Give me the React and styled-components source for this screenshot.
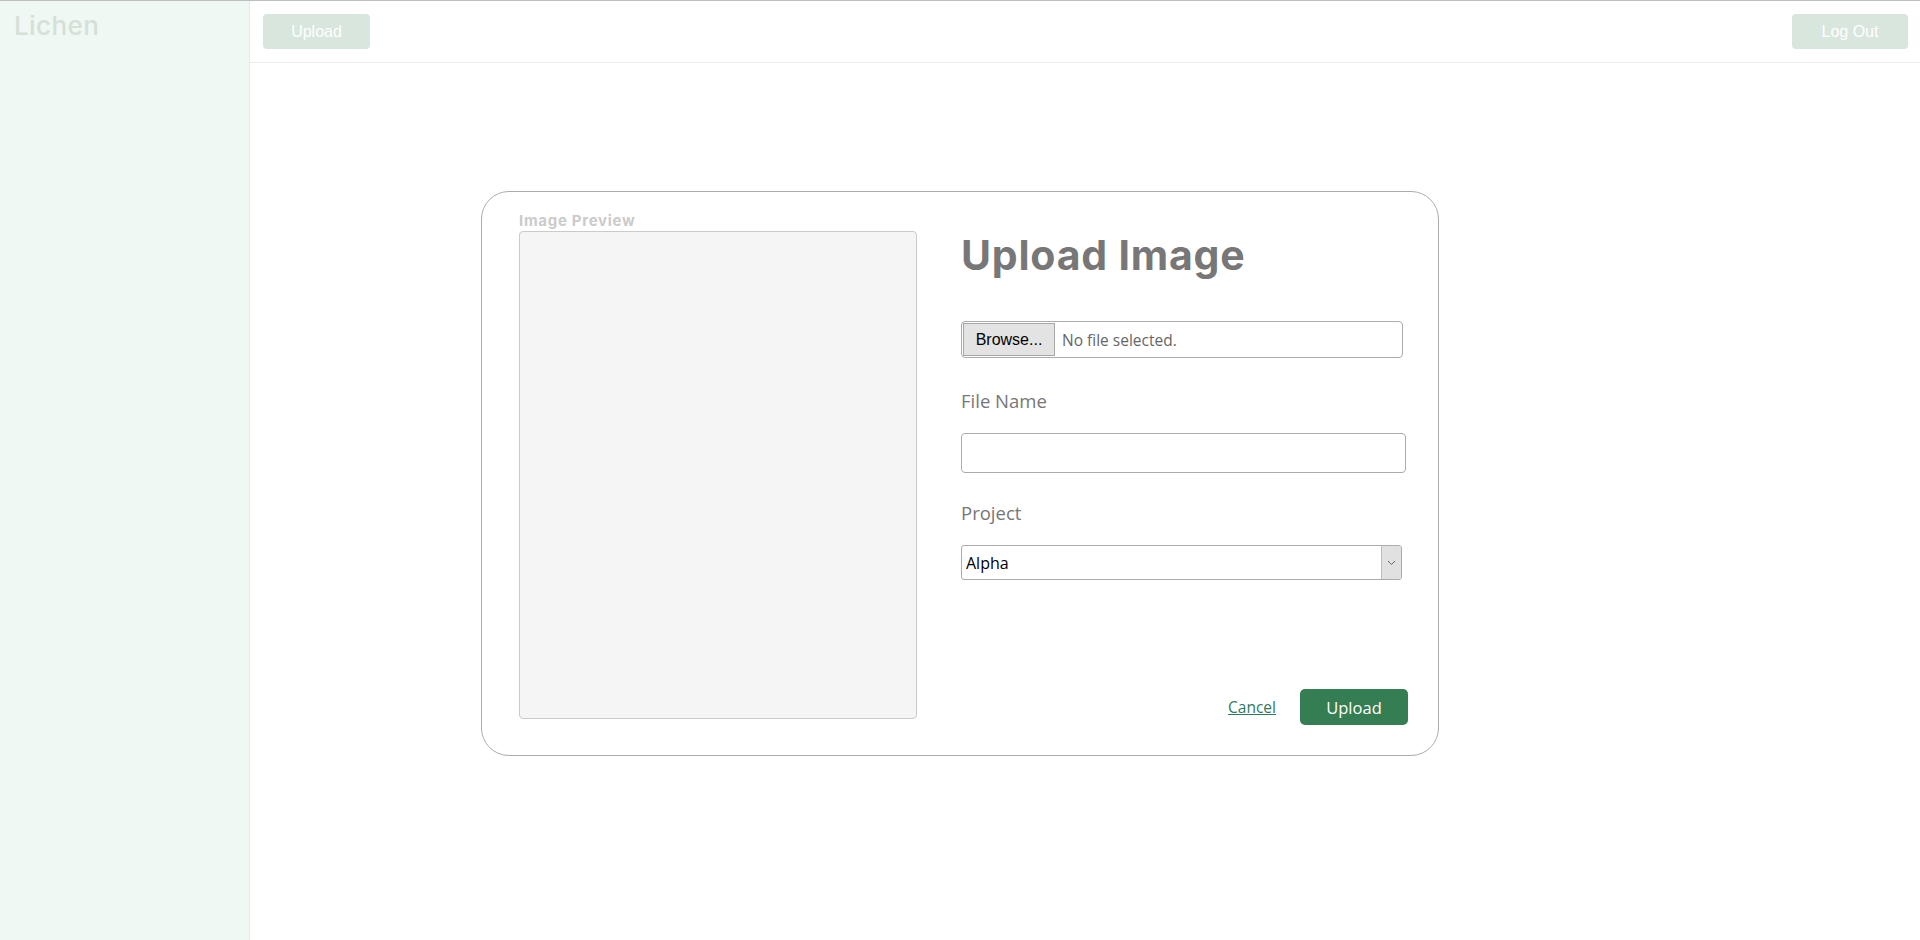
import React from "react";
import styled, { createGlobalStyle } from "styled-components";

const Global = createGlobalStyle`
  html, body { margin: 0; padding: 0; height: 100%; }
  body { background: #fff; font-family: "Open Sans", "Noto Sans", sans-serif; }
  * { box-sizing: border-box; }
`;

const Shell = styled.div`
  display: flex;
  height: 100vh;
  border-top: 1px solid #bdbdbd;
`;

const Sidebar = styled.aside`
  width: 250px;
  flex: none;
  background: #eff8f3;
  border-right: 1px solid #e3ebe6;
  padding: 8px 14px;
`;

const Logo = styled.div`
  font-family: Inter, sans-serif;
  font-weight: 500;
  font-size: 26px;
  line-height: 34px;
  color: #d5e0d9;
  letter-spacing: 0.4px;
`;

const Main = styled.main`
  flex: 1;
  display: flex;
  flex-direction: column;
`;

const Header = styled.header`
  height: 62px;
  display: flex;
  align-items: center;
  justify-content: space-between;
  padding: 0 12px 0 13px;
  border-bottom: 1px solid #ececec;
`;

const GhostButton = styled.button`
  height: 35px;
  width: ${(p) => p.$w}px;
  border: none;
  border-radius: 4px;
  background: #d8e6dd;
  color: #fff;
  font-family: "Liberation Sans", Arial, sans-serif;
  font-size: 16px;
  cursor: pointer;
`;

const Overlay = styled.div`
  position: fixed;
  inset: 0;
  display: flex;
  align-items: center;
  justify-content: center;
  pointer-events: none;
`;

const Modal = styled.section`
  pointer-events: auto;
  width: 958px;
  height: 565px;
  margin-top: 7px;
  background: #fff;
  border: 1px solid #ababab;
  border-radius: 28px;
  padding: 19px 30px 0 37px;
  display: flex;
  gap: 44px;
`;

const PreviewCol = styled.div`
  width: 398px;
  flex: none;
`;

const PreviewLabel = styled.div`
  font-family: Inter, sans-serif;
  font-weight: 700;
  font-size: 15px;
  line-height: 20px;
  letter-spacing: 0.7px;
  color: #cbcbcb;
`;

const PreviewBox = styled.div`
  height: 488px;
  background: #f5f5f5;
  border: 1px solid #cacaca;
  border-radius: 4px;
`;

const FormCol = styled.div`
  flex: 1;
  display: flex;
  flex-direction: column;
  padding-top: 19px;
`;

const Title = styled.h1`
  margin: 0;
  font-family: Inter, sans-serif;
  font-weight: 700;
  font-size: 41px;
  line-height: 50px;
  letter-spacing: 0.8px;
  color: #777;
`;

const FileBox = styled.div`
  margin-top: 41px;
  width: 442px;
  height: 37px;
  border: 1px solid #ababab;
  border-radius: 4px;
  display: flex;
  align-items: center;
  padding: 1px;
  gap: 7px;
`;

const BrowseButton = styled.button`
  width: 92px;
  height: 33px;
  border: 1px solid #a8a8a8;
  background: #e3e3e3;
  color: #000;
  font-family: "Liberation Sans", Arial, sans-serif;
  font-size: 16px;
  padding: 0;
`;

const FileStatus = styled.span`
  font-size: 15.5px;
  color: #666;
`;

const FieldLabel = styled.label`
  margin-top: ${(p) => p.$mt}px;
  font-size: 18.5px;
  line-height: 26px;
  color: #777;
`;

const TextInput = styled.input`
  margin-top: 19px;
  width: 445px;
  height: 40px;
  border: 1px solid #ababab;
  border-radius: 4px;
  padding: 0 8px;
  font-size: 16px;
  outline: none;
`;

const SelectWrap = styled.div`
  position: relative;
  margin-top: 19px;
  width: 441px;
  height: 35px;
`;

const Select = styled.select`
  appearance: none;
  width: 100%;
  height: 100%;
  border: 1px solid #ababab;
  border-radius: 3px;
  background: #fff;
  padding: 0 4px;
  font-family: "Open Sans", sans-serif;
  font-size: 16px;
  color: #000;
  outline: none;
`;

const Chevron = styled.span`
  position: absolute;
  top: 1px;
  right: 1px;
  bottom: 1px;
  width: 20px;
  background: #e1e1e1;
  border-left: 1px solid #bdbdbd;
  border-radius: 0 2px 2px 0;
  display: flex;
  align-items: center;
  justify-content: center;
  pointer-events: none;
`;

const Actions = styled.div`
  margin-top: 109px;
  display: flex;
  justify-content: flex-end;
  align-items: center;
  gap: 24px;
`;

const CancelLink = styled.a`
  font-size: 15.5px;
  color: #2f7a5c;
  text-decoration: underline;
  cursor: pointer;
`;

const PrimaryButton = styled.button`
  width: 108px;
  height: 36px;
  border: none;
  border-radius: 5px;
  background: #357d52;
  color: #fff;
  font-family: "Open Sans", sans-serif;
  font-size: 16.5px;
  cursor: pointer;
`;

export default function App() {
  return (
    <>
      <Global />
      <Shell>
        <Sidebar>
          <Logo>Lichen</Logo>
        </Sidebar>
        <Main>
          <Header>
            <GhostButton $w={107}>Upload</GhostButton>
            <GhostButton $w={116}>Log Out</GhostButton>
          </Header>
        </Main>
      </Shell>
      <Overlay>
        <Modal>
          <PreviewCol>
            <PreviewLabel>Image Preview</PreviewLabel>
            <PreviewBox />
          </PreviewCol>
          <FormCol>
            <Title>Upload Image</Title>
            <FileBox>
              <BrowseButton type="button">Browse...</BrowseButton>
              <FileStatus>No file selected.</FileStatus>
            </FileBox>
            <FieldLabel $mt={30}>File Name</FieldLabel>
            <TextInput type="text" />
            <FieldLabel $mt={27}>Project</FieldLabel>
            <SelectWrap>
              <Select defaultValue="Alpha">
                <option>Alpha</option>
                <option>Beta</option>
              </Select>
              <Chevron>
                <svg width="9" height="6" viewBox="0 0 9 6">
                  <path d="M1 1l3.5 3.5L8 1" fill="none" stroke="#666" strokeWidth="1" />
                </svg>
              </Chevron>
            </SelectWrap>
            <Actions>
              <CancelLink>Cancel</CancelLink>
              <PrimaryButton type="button">Upload</PrimaryButton>
            </Actions>
          </FormCol>
        </Modal>
      </Overlay>
    </>
  );
}
